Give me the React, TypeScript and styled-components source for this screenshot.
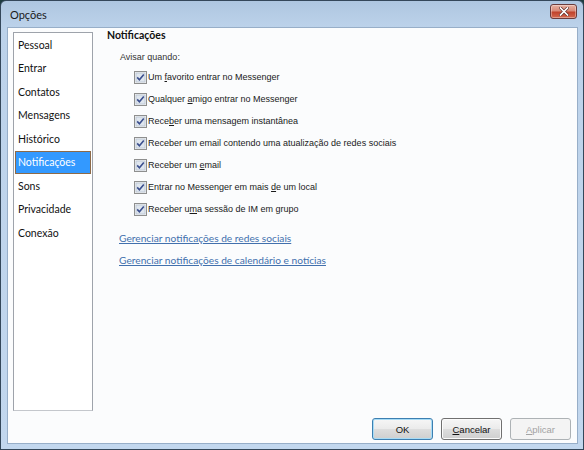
import styled, { createGlobalStyle } from "styled-components";

type Option = {
  before: string;
  key: string;
  after: string;
};

const GlobalStyle = createGlobalStyle`
  html, body {
    margin: 0;
    padding: 0;
    background: #1e3c40;
  }
  * {
    box-sizing: border-box;
  }
`;

const sideItems = [
  "Pessoal",
  "Entrar",
  "Contatos",
  "Mensagens",
  "Histórico",
  "Notificações",
  "Sons",
  "Privacidade",
  "Conexão",
];

const options: Option[] = [
  { before: "Um ", key: "f", after: "avorito entrar no Messenger" },
  { before: "Qualquer ", key: "a", after: "migo entrar no Messenger" },
  { before: "Rece", key: "b", after: "er uma mensagem instantânea" },
  { before: "Receber um email contendo uma atualização de redes sociais", key: "", after: "" },
  { before: "Receber um ", key: "e", after: "mail" },
  { before: "Entrar no Messenger em mais ", key: "d", after: "e um local" },
  { before: "Receber u", key: "m", after: "a sessão de IM em grupo" },
];

const Window = styled.div`
  width: 584px;
  height: 450px;
  display: flex;
  flex-direction: column;
  border: 1px solid #34475a;
  border-radius: 6px 6px 0 0;
  background: linear-gradient(to bottom, #aec6e0 0px, #bcd2ea 26px, #c2d7ee 100%);
  overflow: hidden;
`;

const TitleBar = styled.div`
  height: 26px;
  flex: none;
  display: flex;
  align-items: center;
  justify-content: space-between;
  padding: 0 6px 0 9px;
`;

const Title = styled.span`
  font-family: Lato, "Noto Sans", sans-serif;
  font-size: 11px;
  color: #1a1a1a;
  margin-top: 1px;
`;

const CloseButton = styled.div`
  width: 27px;
  height: 15px;
  margin-top: -5px;
  border: 1px solid #6a3c3c;
  border-radius: 3px;
  background: linear-gradient(to bottom, #e8b0a0 0%, #d88a78 45%, #c0432c 55%, #d46a50 100%);
  display: flex;
  align-items: center;
  justify-content: center;
  box-shadow: inset 0 0 0 1px rgba(255, 255, 255, 0.35);
`;

const Client = styled.div`
  flex: 1;
  margin: 0 5px 5px 6px;
  border: 1px solid #97aec8;
  background: #fbfcfd;
  display: flex;
  flex-direction: column;
`;

const Body = styled.div`
  flex: 1;
  display: flex;
  padding-left: 5px;
`;

const Sidebar = styled.div`
  width: 80px;
  height: 379px;
  margin-top: 4px;
  border: 1px solid #9ea3ab;
  border-bottom-color: #c4c7cc;
  background: #ffffff;
  padding: 0 1px;
  display: flex;
  flex-direction: column;
`;

const SideItem = styled.div<{ $selected?: boolean }>`
  height: 23.5px;
  display: flex;
  align-items: center;
  padding-left: 2px;
  font-family: Lato, "Noto Sans", sans-serif;
  font-size: 10.5px;
  color: ${(p) => (p.$selected ? "#ffffff" : "#111111")};
  background: ${(p) => (p.$selected ? "#3399ff" : "transparent")};
  border: 1px solid ${(p) => (p.$selected ? "#8d6a48" : "transparent")};
`;

const Main = styled.div`
  flex: 1;
  padding-left: 14px;
  display: flex;
  flex-direction: column;
`;

const Heading = styled.div`
  font-family: Lato, "Noto Sans", sans-serif;
  font-weight: bold;
  font-size: 10.5px;
  color: #111;
  height: 14px;
  line-height: 14px;
`;

const Prompt = styled.div`
  font-family: "Liberation Sans", Arial, sans-serif;
  font-size: 9px;
  color: #333;
  margin: 9px 0 0 13px;
  height: 12px;
  line-height: 12px;
`;

const OptionList = styled.div`
  display: flex;
  flex-direction: column;
  margin: 3px 0 0 27px;
`;

const OptionRow = styled.label`
  height: 22px;
  display: flex;
  align-items: center;
  gap: 1px;
  font-family: "Liberation Sans", Arial, sans-serif;
  font-size: 9px;
  color: #1a1a1a;
`;

const Accel = styled.span`
  text-decoration: underline;
`;

const Links = styled.div`
  display: flex;
  flex-direction: column;
  margin: 11px 0 0 12px;
  gap: 8px;
`;

const LinkText = styled.a`
  font-family: Lato, "Noto Sans", sans-serif;
  font-size: 10.2px;
  color: #4270ad;
  text-decoration: underline;
  height: 14px;
  line-height: 14px;
  cursor: pointer;
`;

const Footer = styled.div`
  flex: none;
  display: flex;
  justify-content: flex-end;
  gap: 8px;
  padding: 7px 6px 3px 0;
`;

const Button = styled.button<{ $default?: boolean }>`
  width: 61px;
  height: 22px;
  padding: 0;
  border-radius: 3px;
  border: 1px solid ${(p) => (p.$default ? "#3c7fb1" : "#707070")};
  background: linear-gradient(to bottom, #f6f6f6 0%, #ebebeb 48%, #dddddd 52%, #cfcfcf 100%);
  box-shadow: inset 0 0 0 1px ${(p) => (p.$default ? "#a8dcf6" : "#fbfbfb")};
  font-family: "Liberation Sans", Arial, sans-serif;
  font-size: 9.5px;
  color: #111;

  &:disabled {
    border-color: #adb2b5;
    background: #f4f4f4;
    box-shadow: none;
    color: #a3a3a3;
  }
`;

const CheckIcon = () => (
  <svg width="13" height="13" viewBox="0 0 13 13">
    <rect x="0.5" y="0.5" width="12" height="12" fill="#f4f4f4" stroke="#8e8f8f" />
    <rect x="2" y="2" width="9" height="9" fill="#dfe6ee" stroke="#b7c3d1" strokeWidth="0.8" />
    <path d="M3.2 6.4 L5.4 8.8 L9.8 3.4" fill="none" stroke="#3b4f8e" strokeWidth="1.6" />
  </svg>
);

const CloseIcon = () => (
  <svg width="10" height="9" viewBox="0 0 10 9">
    <path d="M1.5 1 L8.5 8 M8.5 1 L1.5 8" stroke="#5a2a26" strokeWidth="3" strokeLinecap="square" />
    <path d="M1.5 1 L8.5 8 M8.5 1 L1.5 8" stroke="#ffffff" strokeWidth="1.7" strokeLinecap="square" />
  </svg>
);

export default function App() {
  return (
    <>
      <GlobalStyle />
      <Window>
        <TitleBar>
          <Title>Opções</Title>
          <CloseButton>
            <CloseIcon />
          </CloseButton>
        </TitleBar>
        <Client>
          <Body>
            <Sidebar>
              {sideItems.map((item) => (
                <SideItem key={item} $selected={item === "Notificações"}>
                  {item}
                </SideItem>
              ))}
            </Sidebar>
            <Main>
              <Heading>Notificações</Heading>
              <Prompt>Avisar quando:</Prompt>
              <OptionList>
                {options.map((opt) => (
                  <OptionRow key={opt.before + opt.after}>
                    <CheckIcon />
                    <span>
                      {opt.before}
                      {opt.key && <Accel>{opt.key}</Accel>}
                      {opt.after}
                    </span>
                  </OptionRow>
                ))}
              </OptionList>
              <Links>
                <LinkText>Gerenciar notificações de redes sociais</LinkText>
                <LinkText>Gerenciar notificações de calendário e notícias</LinkText>
              </Links>
            </Main>
          </Body>
          <Footer>
            <Button $default>OK</Button>
            <Button>
              <Accel>C</Accel>ancelar
            </Button>
            <Button disabled>
              <Accel>A</Accel>plicar
            </Button>
          </Footer>
        </Client>
      </Window>
    </>
  );
}
